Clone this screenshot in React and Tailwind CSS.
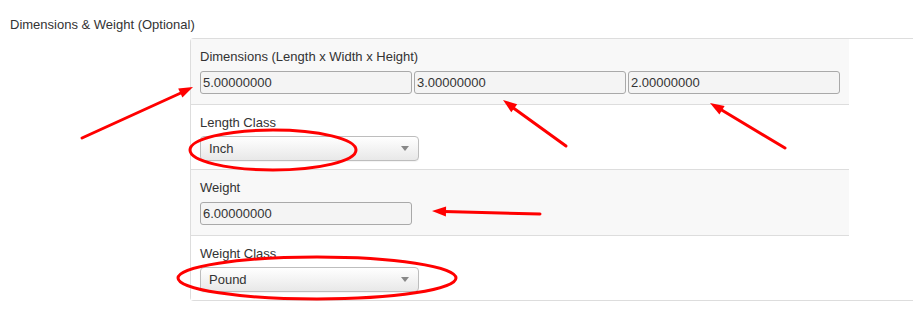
import React from 'react';

const font = { fontFamily: '"Liberation Sans", Arial, sans-serif' };

const TextInput = ({ value }) => (
  <div className="w-[212px] h-[23px] border border-[#a9a9a9] rounded-[3px] bg-[#f4f4f4] pl-[2px] flex items-center text-[13px] text-[#333]">
    {value}
  </div>
);

const Select = ({ value }) => (
  <div className="w-[219px] h-[25px] border border-[#bdbdbd] rounded-[4px] bg-gradient-to-b from-white to-[#e8e8e8] pl-[8px] pr-[9px] flex items-center justify-between text-[13px] text-[#333] shadow-[0_1px_1px_rgba(0,0,0,0.05)]">
    <span>{value}</span>
    <svg width="8" height="5" viewBox="0 0 8 5"><path d="M0 0h8L4 5z" fill="#888" /></svg>
  </div>
);

const Row = ({ label, grey, first, gap, children }) => (
  <div className={`px-[9px] pt-[9px] ${first ? '' : 'border-t border-[#dddddd]'} ${grey ? 'bg-[#f8f8f8]' : 'bg-white'} ${gap ? 'pb-[10px]' : 'pb-[8px]'}`}>
    <div className={`text-[13px] leading-[18px] text-[#333] ${gap ? 'mb-[5px]' : 'mb-[4px]'}`}>{label}</div>
    {children}
  </div>
);

export default function App() {
  return (
    <div className="relative w-[913px] h-[329px] bg-white overflow-hidden" style={font}>
      <div className="pt-[16px] pl-[10px] text-[13px] leading-[18px] text-[#333]">Dimensions &amp; Weight (Optional)</div>
      <div className="mt-[4px] ml-[190px] border-t border-l border-b border-[#dddddd] rounded-l-[4px]">
        <div className="w-[658px]">
          <Row label="Dimensions (Length x Width x Height)" grey first gap>
            <div className="flex gap-[2px]">
              <TextInput value="5.00000000" />
              <TextInput value="3.00000000" />
              <TextInput value="2.00000000" />
            </div>
          </Row>
          <Row label="Length Class">
            <Select value="Inch" />
          </Row>
          <Row label="Weight" grey gap>
            <TextInput value="6.00000000" />
          </Row>
          <Row label="Weight Class">
            <Select value="Pound" />
          </Row>
        </div>
      </div>

      {/* red annotations */}
      <svg className="absolute inset-0 pointer-events-none" width="913" height="329">
        <g stroke="#ff0000" strokeWidth="3" fill="none" strokeLinecap="round">
          <line x1="82" y1="138" x2="183" y2="92" />
          <line x1="566" y1="146" x2="512" y2="107" />
          <line x1="785" y1="148" x2="720" y2="109" />
          <line x1="540" y1="214" x2="444" y2="211.5" />
          <ellipse cx="273" cy="150" rx="83" ry="20" />
          <ellipse cx="317" cy="278" rx="139" ry="21" />
        </g>
        <g fill="#ff0000">
          <polygon points="193,87 182.4,97.4 178.2,88.4" />
          <polygon points="503,100 517.2,104.3 511.3,112.3" />
          <polygon points="710,103 724.6,105.9 719.4,114.5" />
          <polygon points="432,211 446.1,206.4 445.9,216.4" />
        </g>
      </svg>
    </div>
  );
}
